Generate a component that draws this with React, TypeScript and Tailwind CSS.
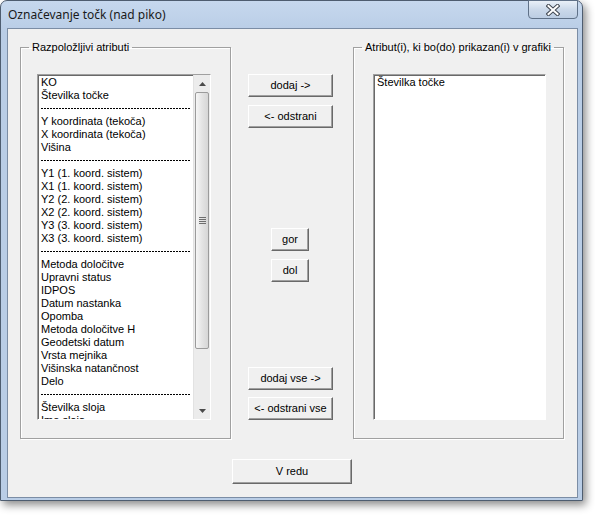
import React from "react";

const available = [
  "KO",
  "Številka točke",
  "-",
  "Y koordinata (tekoča)",
  "X koordinata (tekoča)",
  "Višina",
  "-",
  "Y1 (1. koord. sistem)",
  "X1 (1. koord. sistem)",
  "Y2 (2. koord. sistem)",
  "X2 (2. koord. sistem)",
  "Y3 (3. koord. sistem)",
  "X3 (3. koord. sistem)",
  "-",
  "Metoda določitve",
  "Upravni status",
  "IDPOS",
  "Datum nastanka",
  "Opomba",
  "Metoda določitve H",
  "Geodetski datum",
  "Vrsta mejnika",
  "Višinska natančnost",
  "Delo",
  "-",
  "Številka sloja",
  "Ime sloja",
];

const shown = ["Številka točke"];

const Button = ({ label, className }: { label: string; className: string }) => (
  <div
    role="button"
    className={
      "flex items-center justify-center bg-[#f0f0f0] border border-t-white border-l-white border-r-[#696969] border-b-[#696969] shadow-[inset_-1px_-1px_0_#a0a0a0] text-[11px] font-normal leading-none text-black select-none " +
      className
    }
  >
    {label}
  </div>
);

const Arrow = ({ up }: { up: boolean }) => (
  <div className="h-[17px] flex items-center justify-center">
    <svg width="7" height="4" viewBox="0 0 7 4">
      <path d={up ? "M0 4 L3.5 0 L7 4 Z" : "M0 0 L3.5 4 L7 0 Z"} fill="#4a4a4a" />
    </svg>
  </div>
);

const ScrollBar = () => (
  <div className="w-[17px] flex flex-col bg-[#ececec] border-l border-[#e2e2e2]">
    <Arrow up />
    <div className="h-[257px] mx-[1px] rounded-[2px] border border-[#9b9b9b] bg-[linear-gradient(to_right,#f6f6f6,#e4e4e4,#d6d6d6)] flex items-center justify-center">
      <div className="flex flex-col gap-[1px]">
        <div className="w-[7px] h-px bg-[#6e6e6e]" />
        <div className="w-[7px] h-px bg-[#6e6e6e]" />
        <div className="w-[7px] h-px bg-[#6e6e6e]" />
        <div className="w-[7px] h-px bg-[#6e6e6e]" />
      </div>
    </div>
    <div className="flex-1" />
    <Arrow up={false} />
  </div>
);

const ListRows = ({ items }: { items: string[] }) => (
  <div className="flex-1 overflow-hidden">
    {items.map((item, i) =>
      item === "-" ? (
        <div key={i} className="h-[13px] flex items-center px-[2px]">
          <div className="w-full h-px bg-[linear-gradient(to_right,#000_2px,transparent_2px)] bg-[length:3px_1px]" />
        </div>
      ) : (
        <div key={i} className="h-[13px] leading-[13px] px-[2px] whitespace-nowrap text-[11px] text-black">
          {item}
        </div>
      )
    )}
  </div>
);

const GroupBox = ({ title, children }: { title: string; children: React.ReactNode }) => (
  <fieldset className="w-[211px] h-[398px] border border-[#a0a0a0] shadow-[1px_1px_0_white,inset_1px_1px_0_white] p-0 m-0 min-w-0">
    <legend className="ml-[8px] px-[3px] text-[11px] leading-[13px] text-black">{title}</legend>
    {children}
  </fieldset>
);

export default function App() {
  return (
    <div className="w-[595px] h-[516px] bg-white font-['Liberation_Sans',Arial,sans-serif]">
      <div className="w-[583px] h-[501px] flex flex-col border border-[#4e5d70] rounded-t-[7px] bg-[linear-gradient(to_bottom,#c6d8ee,#b9cde6_30px)] pl-[6px] pr-[4px] pb-[2px] shadow-[3px_4px_8px_rgba(0,0,0,0.45)]">
        <div className="h-[27px] flex items-start justify-between">
          <div className="pt-[6px] pl-[1px] text-[12px] leading-[15px] text-[#1a1a1a] font-['Noto_Sans',sans-serif]">
            Označevanje točk (nad piko)
          </div>
          <div className="w-[50px] h-[19px] -mt-px rounded-b-[4px] border border-[#5f7188] bg-[linear-gradient(to_bottom,#e9f0f8,#cbd9ea_50%,#bccde3)] flex items-center justify-center">
            <svg width="14" height="12" viewBox="0 0 14 12">
              <path d="M2.5 2 L11.5 10 M11.5 2 L2.5 10" stroke="#3f4650" strokeWidth="4" strokeLinecap="square" />
              <path d="M2.5 2 L11.5 10 M11.5 2 L2.5 10" stroke="#ffffff" strokeWidth="2" strokeLinecap="square" />
            </svg>
          </div>
        </div>
        <div className="flex-1 bg-[#f0f0f0] border border-[#7b8da5]">
          <div className="flex mt-[12px] ml-[12px]">
            <GroupBox title="Razpoložljivi atributi">
              <div className="mt-[20px] ml-[16px] w-[174px] h-[346px] flex bg-white border border-t-[#a0a0a0] border-l-[#a0a0a0] border-r-white border-b-white shadow-[inset_1px_1px_0_#696969]">
                <div className="flex-1 flex flex-col pt-[1px] pl-[1px] overflow-hidden">
                  <ListRows items={available} />
                </div>
                <ScrollBar />
              </div>
            </GroupBox>

            <div className="w-[122px] flex flex-col">
              <Button label="dodaj ->" className="mt-[33px] ml-[17px] w-[85px] h-[23px]" />
              <Button label="<- odstrani" className="mt-[8px] ml-[17px] w-[85px] h-[23px]" />
              <Button label="gor" className="mt-[100px] ml-[40px] w-[38px] h-[23px]" />
              <Button label="dol" className="mt-[8px] ml-[40px] w-[38px] h-[23px]" />
              <Button label="dodaj vse ->" className="mt-[85px] ml-[17px] w-[85px] h-[23px]" />
              <Button label="<- odstrani vse" className="mt-[7px] ml-[17px] w-[85px] h-[23px]" />
            </div>

            <GroupBox title="Atribut(i), ki bo(do) prikazan(i) v grafiki">
              <div className="mt-[20px] ml-[19px] w-[173px] h-[346px] flex bg-white border border-t-[#a0a0a0] border-l-[#a0a0a0] border-r-white border-b-white shadow-[inset_1px_1px_0_#696969]">
                <div className="flex-1 flex flex-col pt-[1px] pl-[1px] overflow-hidden">
                  <ListRows items={shown} />
                </div>
              </div>
            </GroupBox>
          </div>
          <Button label="V redu" className="mt-[20px] ml-[224px] w-[120px] h-[25px]" />
        </div>
      </div>
    </div>
  );
}
